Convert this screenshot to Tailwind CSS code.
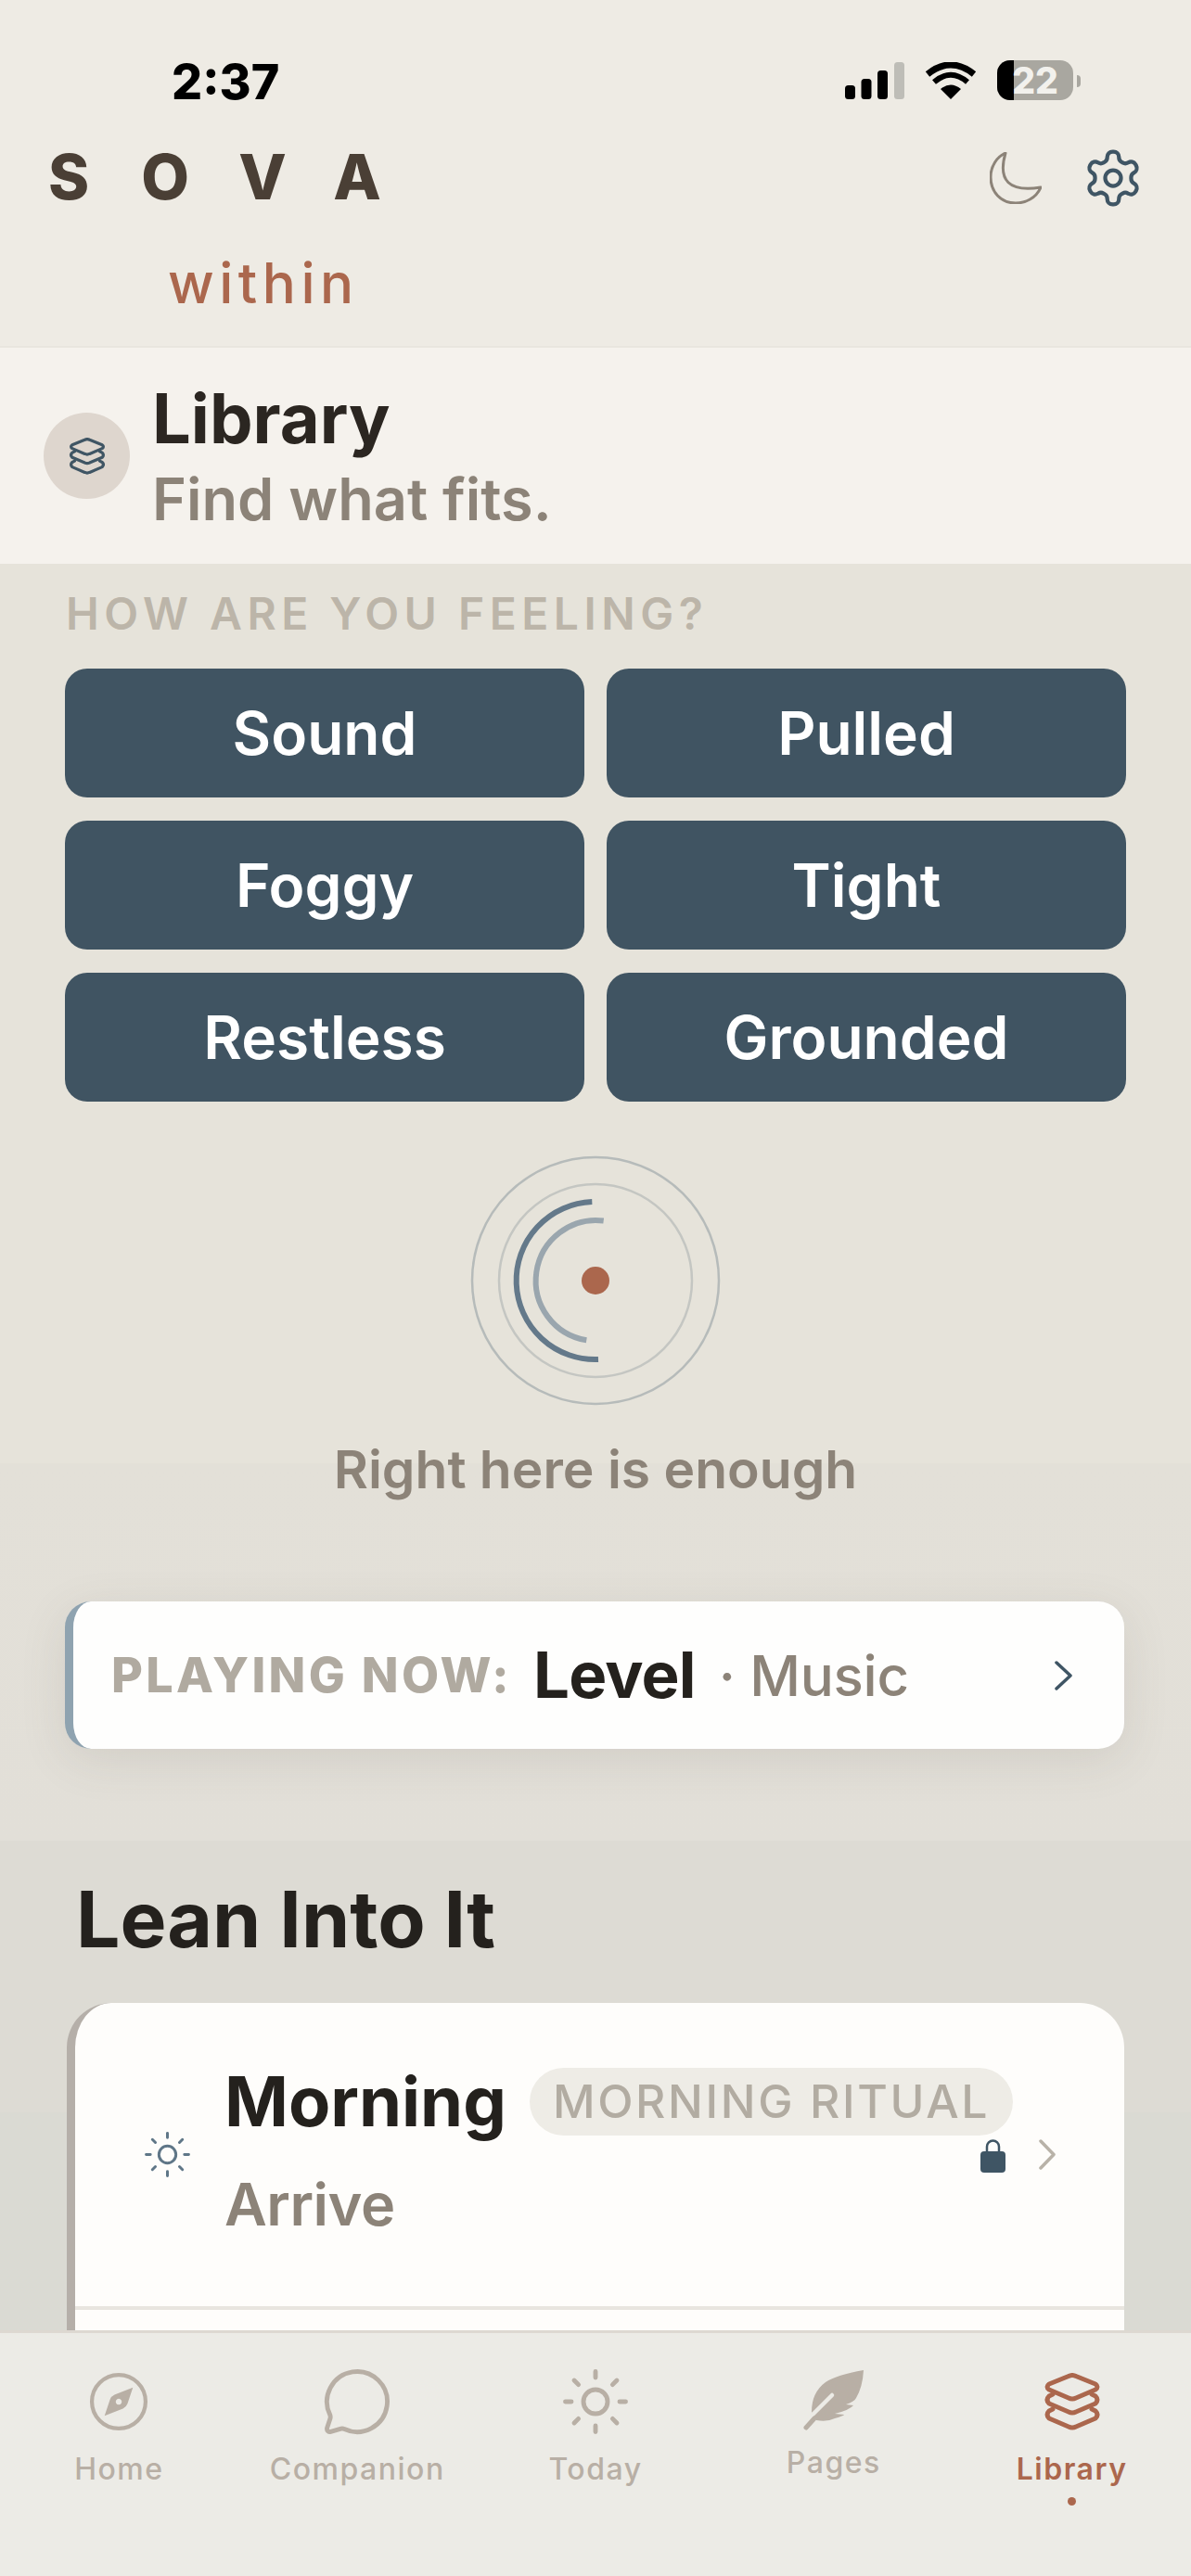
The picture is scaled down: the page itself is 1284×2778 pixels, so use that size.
<!DOCTYPE html>
<html><head><meta charset="utf-8"><script src="https://cdn.jsdelivr.net/npm/@tailwindcss/browser@4"></script></head>
<body class="m-0">
<div class="relative w-[1284px] h-[2778px] overflow-hidden font-[Inter,sans-serif] bg-[linear-gradient(to_bottom,#E6E3DA_0,#E6E3DA_1578px,#E3E0D8_1578px,#E2DFD8_1985px,#DDDBD4_1985px,#DDDBD4_2278px,#DADAD3_2278px,#DADAD3_2778px)]">
  <header class="h-[375px] bg-[#EEEBE4] border-b-[2px] border-[#E9E6DF] relative">
    <div class="flex justify-between h-[151px]">
      <div class="pl-[185px] pt-[58px] text-[52px] leading-[62px] font-extrabold text-black">2:37</div>
      <div class="flex items-start">
        <svg class="mt-[67px] mr-[22px]" width="64" height="40" viewBox="0 0 64 40"><rect x="0" y="25" width="11" height="15" rx="3.5"/><rect x="17.500" y="18" width="11" height="22" rx="3.5"/><rect x="35" y="9" width="11" height="31" rx="3.5"/><rect x="53" y="0" width="11" height="40" rx="3.5" fill="#BEBDB7"/></svg>
        <svg class="mt-[67px] mr-[22px]" width="56" height="40" viewBox="0 0 56 40"><path d="M28 40 L17 29 Q28 20 39 29Z"/><path d="M10 21.500 Q28 6 46 21.500" fill="none" stroke="#000" stroke-width="6"/><path d="M3 13 Q28 -7 53 13" fill="none" stroke="#000" stroke-width="7"/></svg>
        <div class="mt-[65px] relative w-[82px] h-[43px] rounded-[14px] bg-[#A9A7A0] flex items-center justify-center">
          <div class="absolute left-0 top-0 bottom-0 w-[18px] rounded-l-[14px] bg-black"></div>
          <span class="relative text-[39px] leading-[43px] font-extrabold text-[#F2F1ED]">22</span>
        </div>
        <div class="mt-[81px] ml-[4px] mr-[119px] w-[4px] h-[13px] rounded-r-full bg-[#A9A7A0]"></div>
      </div>
    </div>
    <div class="flex justify-between">
      <div class="w-[470px]">
        <div class="text-[67px] leading-[80px] font-extrabold tracking-[56px] text-[#4A3F35] pl-[52px]">SOVA</div>
      </div>
      <div class="flex items-start pr-[50px]">
        <svg class="mt-[13px] mr-[43px]" width="56" height="56" viewBox="0 0 56 56" fill="none" stroke="#8C8378" stroke-width="3" stroke-linecap="round" stroke-linejoin="round"><path d="M17 1 Q4 46 55 38 C50 50 38 55 28 55 C12 55 1 43 1 27 C1 15 8 5 17 1Z"/></svg>
        <svg class="mt-[7px]" width="68" height="68" viewBox="0 0 24 24" fill="none" stroke="#3F5564" stroke-width="1.5" stroke-linecap="round" stroke-linejoin="round"><path d="M12.220 2h-.44a2 2 0 0 0-2 2v.18a2 2 0 0 1-1 1.730l-.43.25a2 2 0 0 1-2 0l-.15-.08a2 2 0 0 0-2.730.73l-.22.38a2 2 0 0 0 .73 2.730l.15.1a2 2 0 0 1 1 1.720v.51a2 2 0 0 1-1 1.740l-.15.09a2 2 0 0 0-.73 2.730l.22.38a2 2 0 0 0 2.730.73l.15-.08a2 2 0 0 1 2 0l.43.25a2 2 0 0 1 1 1.730V20a2 2 0 0 0 2 2h.44a2 2 0 0 0 2-2v-.18a2 2 0 0 1 1-1.730l.43-.25a2 2 0 0 1 2 0l.15.08a2 2 0 0 0 2.730-.73l.22-.39a2 2 0 0 0-.73-2.730l-.15-.08a2 2 0 0 1-1-1.740v-.5a2 2 0 0 1 1-1.740l.15-.09a2 2 0 0 0 .73-2.730l-.22-.38a2 2 0 0 0-2.730-.73l-.15.08a2 2 0 0 1-2 0l-.43-.25a2 2 0 0 1-1-1.730V4a2 2 0 0 0-2-2z"/><circle cx="12" cy="12" r="3"/></svg>
      </div>
    </div>
    <div class="pl-[181px] mt-[41px] text-[60px] leading-[66px] font-medium tracking-[5.500px] text-[#AB674D]">within</div>
  </header>

  <section class="h-[233px] bg-[#F5F2ED] flex items-center pl-[47px] gap-[25px]">
    <div class="w-[93px] h-[93px] rounded-full bg-[#DED6CE] flex items-center justify-center">
      <svg width="40" height="40" viewBox="0 0 62 62" fill="none" stroke="#3F5564" stroke-width="5" stroke-linecap="round" stroke-linejoin="round"><path d="M27 3.500 Q31 1.500 35 3.500 L56 12 Q60 15 56 18 L35 27 Q31 29 27 27 L6 18 Q2 15 6 12Z"/><path d="M10 23 L6 25 Q2 29 6 33 L27 42 Q31 44 35 42 L56 33 Q60 29 56 25 L52 23"/><path d="M10 39 L6 41 Q2 45 6 49 L27 58 Q31 60 35 58 L56 49 Q60 45 56 41 L52 39"/></svg>
    </div>
    <div class="pt-[7px]">
      <div class="text-[74px] leading-[87px] font-bold text-[#2B2621] ml-[-1px]">Library</div>
      <div class="text-[63px] leading-[87px] font-semibold text-[#8C8378] ml-[-1px]">Find what fits.</div>
    </div>
  </section>

  <div class="pt-[24px] pl-[71px] text-[48px] leading-[60px] font-semibold tracking-[5.500px] text-[#BCB5A9] whitespace-nowrap">HOW ARE YOU FEELING?</div>

  <div class="mt-[29px] mx-[70px] grid grid-cols-2 gap-x-[24px] gap-y-[25px]">
    <div class="h-[139px] rounded-[24px] bg-[#405462] flex items-center justify-center text-[64px] font-semibold text-white">Sound</div>
    <div class="h-[139px] rounded-[24px] bg-[#405462] flex items-center justify-center text-[64px] font-semibold text-white">Pulled</div>
    <div class="h-[139px] rounded-[24px] bg-[#405462] flex items-center justify-center text-[64px] font-semibold text-white">Foggy</div>
    <div class="h-[139px] rounded-[24px] bg-[#405462] flex items-center justify-center text-[64px] font-semibold text-white">Tight</div>
    <div class="h-[139px] rounded-[24px] bg-[#405462] flex items-center justify-center text-[64px] font-semibold text-white">Restless</div>
    <div class="h-[139px] rounded-[24px] bg-[#405462] flex items-center justify-center text-[64px] font-semibold text-white">Grounded</div>
  </div>

  <svg class="mt-[53px] mx-auto block" width="280" height="280" viewBox="0 0 280 280" fill="none">
    <circle cx="140" cy="140" r="133" stroke="#B6BBBA" stroke-width="2.500"/>
    <circle cx="140" cy="140" r="104" stroke="#C4C6C2" stroke-width="2.500"/>
    <path d="M136.300 55.080 A85 85 0 0 0 143 224.950" stroke="#64798A" stroke-width="6"/>
    <path d="M148.700 75.600 A65 65 0 0 0 130.300 204.270" stroke="#9AA6AE" stroke-width="6"/>
    <circle cx="140" cy="140" r="15" fill="#AB674D"/>
  </svg>

  <div class="mt-[24px] text-center text-[57px] leading-[80px] font-semibold text-[#8C8378]">Right here is enough</div>

  <div class="mt-[102px] ml-[70px] w-[1142px] h-[159px] rounded-[28px] bg-[#FEFEFD] border-l-[9px] border-[#8FA3B0] shadow-[0_12px_50px_rgba(90,85,70,0.12)] flex items-center pl-[41px] pr-[54px]">
    <span class="text-[52px] font-extrabold tracking-[3.300px] text-[#B0AAA0] whitespace-nowrap">PLAYING NOW:</span>
    <span class="ml-[23px] text-[69px] font-bold tracking-[-0.800px] text-[#24211D]">Level</span>
    <span class="ml-[25px] text-[60px] font-medium tracking-[-0.300px] text-[#8C8378] whitespace-nowrap">· Music</span>
    <svg class="ml-auto" width="22" height="32" viewBox="0 0 22 32" fill="none" stroke="#3F5564" stroke-width="3.500" stroke-linecap="round" stroke-linejoin="round"><path d="M3 2 L18 16 L3 30"/></svg>
  </div>

  <div class="mt-[134px] pl-[82px] text-[84px] leading-[100px] font-bold text-[#24211D]">Lean Into It</div>

  <div class="mt-[40px] ml-[72px] w-[1140px] rounded-[48px] bg-[#FEFDFB] border-l-[9px] border-[#B5AFA9] overflow-hidden">
    <div class="h-[331px] flex items-center pl-[72px] pr-[74px] border-b-[4px] border-[#E8E5DF]">
      <svg class="shrink-0" width="55" height="55" viewBox="0 0 24 24" fill="none" stroke="#5F7687" stroke-width="1.300" stroke-linecap="round"><circle cx="12" cy="12" r="4"/><path d="M12 2v2M12 20v2M4.930 4.930l1.410 1.410M17.660 17.660l1.410 1.410M2 12h2M20 12h2M6.340 17.660l-1.410 1.410M19.070 4.930l-1.410 1.410"/></svg>
      <div class="ml-[34px] mt-[-6px] w-[800px]">
        <div class="flex items-center h-[73px]">
          <span class="text-[74px] font-bold text-[#24211D]">Morning</span>
          <span class="ml-[25px] h-[73px] px-[25px] rounded-full bg-[#EEECE6] flex items-center text-[50px] font-medium tracking-[2.600px] text-[#B2ACA2] whitespace-nowrap">MORNING RITUAL</span>
        </div>
        <div class="mt-[39px] text-[63px] leading-[70px] font-semibold tracking-[-0.500px] text-[#8C8378]">Arrive</div>
      </div>
      <svg class="ml-auto shrink-0" width="29" height="38" viewBox="0 0 29 38"><path d="M8 17 V10 a6.500 6.500 0 0 1 13 0 V17" fill="none" stroke="#3F5564" stroke-width="2.500"/><rect x="1" y="15" width="27" height="23" rx="4" fill="#3F5564"/></svg>
      <svg class="ml-[35px] shrink-0" width="18" height="33" viewBox="0 0 18 33" fill="none" stroke="#B8B2A8" stroke-width="3.500" stroke-linecap="round" stroke-linejoin="round"><path d="M2 2 L16 16.500 L2 31"/></svg>
    </div>
    <div class="h-[200px]"></div>
  </div>

  <nav class="absolute left-0 right-0 bottom-0 h-[265px] bg-[#ECEBE6] border-t-[3px] border-[#DDD8D1] grid grid-cols-5 pt-[35px] text-[32px] leading-[40px] font-medium tracking-[1.500px] text-[#B8AFA5]">
    <div class="flex flex-col items-center">
      <svg width="78" height="78" viewBox="0 0 24 24" fill="none" stroke="#B8AFA5" stroke-width="1.300"><circle cx="12" cy="12" r="8.900"/><path fill-rule="evenodd" fill="#B8AFA5" stroke="none" d="M16.700 7.300 L14.900 12.700 Q14.500 13.800 13.400 14.300 L7.300 16.700 L9.100 11.300 Q9.500 10.200 10.600 9.700Z M12 11 a1 1 0 1 0 .01 0Z"/></svg>
      <span class="mt-[14px]">Home</span>
    </div>
    <div class="flex flex-col items-center">
      <svg width="78" height="78" viewBox="0 0 24 24" fill="none" stroke="#B8AFA5" stroke-width="1.500" stroke-linecap="round" stroke-linejoin="round"><path d="M2.992 16.342a2 2 0 0 1 .094 1.167l-1.065 3.290a1 1 0 0 0 1.236 1.168l3.413-.998a2 2 0 0 1 1.099.092 10 10 0 1 0-4.777-4.719"/></svg>
      <span class="mt-[14px]">Companion</span>
    </div>
    <div class="flex flex-col items-center">
      <svg width="78" height="78" viewBox="0 0 24 24" fill="none" stroke="#B8AFA5" stroke-width="1.500" stroke-linecap="round"><circle cx="12" cy="12" r="4"/><path d="M12 2v2M12 20v2M4.930 4.930l1.410 1.410M17.660 17.660l1.410 1.410M2 12h2M20 12h2M6.340 17.660l-1.410 1.410M19.070 4.930l-1.410 1.410"/></svg>
      <span class="mt-[14px]">Today</span>
    </div>
    <div class="flex flex-col items-center">
      <svg class="mt-[5px]" width="66" height="66" viewBox="0 0 66 66" fill="none"><path fill="#B8AFA5" d="M65 0 Q36 5 24 13 Q9 24 9 45 L14 54 Q26 56 34 52 Q44 49 44 48 L34 47 Q50 43 54 38 L46 37 Q55 34 57 30 Q64 18 65 0Z"/><path d="M31 27 L10 48" stroke="#ECEBE6" stroke-width="4.500" stroke-linecap="round"/><path d="M12 52 L3 62" stroke="#B8AFA5" stroke-width="5" stroke-linecap="round"/></svg>
      <span class="mt-[14px]">Pages</span>
    </div>
    <div class="flex flex-col items-center text-[#AB674D] font-semibold">
      <svg class="my-[8px]" width="62" height="62" viewBox="0 0 62 62" fill="none" stroke="#AB674D" stroke-width="5" stroke-linecap="round" stroke-linejoin="round"><path d="M27 3.500 Q31 1.500 35 3.500 L56 12 Q60 15 56 18 L35 27 Q31 29 27 27 L6 18 Q2 15 6 12Z"/><path d="M10 23 L6 25 Q2 29 6 33 L27 42 Q31 44 35 42 L56 33 Q60 29 56 25 L52 23"/><path d="M10 39 L6 41 Q2 45 6 49 L27 58 Q31 60 35 58 L56 49 Q60 45 56 41 L52 39"/></svg>
      <span class="mt-[14px]">Library</span>
      <span class="mt-[10px] w-[9px] h-[9px] rounded-full bg-[#AB674D]"></span>
    </div>
  </nav>
</div>
</body></html>
